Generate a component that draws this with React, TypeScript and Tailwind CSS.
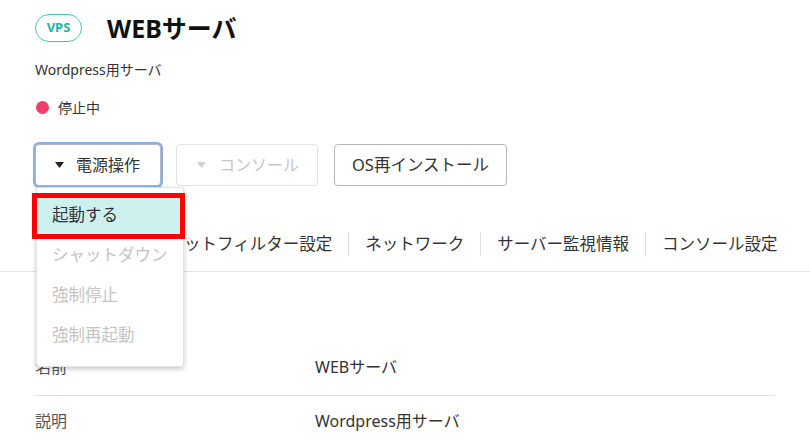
import { useState } from "react";

const font = { fontFamily: '"Noto Sans", "Noto Sans CJK JP", sans-serif' };

const tabs = ["基本情報", "パケットフィルター設定", "ネットワーク", "サーバー監視情報", "コンソール設定"];

const menuItems = [
    { label: "起動する", enabled: true },
    { label: "シャットダウン", enabled: false },
    { label: "強制停止", enabled: false },
    { label: "強制再起動", enabled: false },
];

export default function App() {
    const [open] = useState(true);

    return (
        <div className="w-[810px] h-[446px] overflow-hidden bg-white text-[#333]" style={font}>
            <div className="px-[35px] pt-[14px]">
                {/* Header */}
                <div className="flex items-center h-[28px]">
                    <span className="w-[47px] h-[28px] flex items-center justify-center rounded-full border-[1.5px] border-[#3ec8b6] text-[#1db4a3] text-[13px] font-bold">
                        VPS
                    </span>
                    <h1 className="ml-[25px] text-[25px] font-bold text-[#111] leading-none">WEBサーバ</h1>
                </div>

                <p className="mt-[18px] text-[14px] leading-[20px]">Wordpress用サーバ</p>

                <div className="mt-[17px] flex items-center h-[20px]">
                    <span className="w-[13px] h-[13px] rounded-full bg-[#f23d68] ml-[1px]" />
                    <span className="ml-[9px] text-[14px]">停止中</span>
                </div>

                {/* Action buttons */}
                <div className="mt-[27px] flex items-center gap-[15px]">
                    <div className="relative">
                        <button className="h-[42px] w-[126px] flex items-center pl-[19px] gap-[12px] rounded-[4px] border border-[#b5b5b5] ring-2 ring-[#86aef2] bg-white text-[16px]">
                            <svg width="9" height="6" viewBox="0 0 9 6"><path d="M0 0h9L4.5 6z" fill="#222" /></svg>
                            電源操作
                        </button>
                        {open && (
                            <div className="absolute left-[1px] top-[43px] z-10 w-[148px] bg-white rounded-[3px] border border-[#e2e2e2] shadow-[0_2px_5px_rgba(0,0,0,0.22)] pt-[7px] pb-[11px]">
                                {menuItems.map((item) => (
                                    <div
                                        key={item.label}
                                        className={`h-[40px] flex items-center pl-[15px] text-[16.5px] ${
                                            item.enabled ? "bg-[#cdf1ee] text-[#333]" : "text-[#c4c4c4]"
                                        }`}
                                    >
                                        {item.label}
                                    </div>
                                ))}
                                {/* highlight annotation */}
                                <div className="absolute left-[-5px] top-[5px] w-[153px] h-[46px] border-[5px] border-[#ff0000]" />
                            </div>
                        )}
                    </div>
                    <button disabled className="h-[42px] w-[142px] flex items-center pl-[20px] gap-[13px] rounded-[4px] border border-[#e3e3e3] bg-white text-[16px] text-[#c6c6c6]">
                        <svg width="9" height="6" viewBox="0 0 9 6"><path d="M0 0h9L4.5 6z" fill="#cfcfcf" /></svg>
                        コンソール
                    </button>
                    <button className="ml-[1px] h-[42px] w-[173px] flex items-center justify-center rounded-[4px] border border-[#b5b5b5] bg-white text-[16.5px]">
                        OS再インストール
                    </button>
                </div>
            </div>

            {/* Tabs */}
            <div className="mt-[46px] border-b border-[#e3e3e3] pb-[15px] pl-[36px]">
                <div className="flex items-center h-[24px] text-[16.5px]">
                    {tabs.map((t, i) => (
                        <div
                            key={t}
                            className={`px-[16px] leading-[24px] whitespace-nowrap ${i > 0 ? "border-l border-[#dcdcdc]" : ""}`}
                        >
                            {t}
                        </div>
                    ))}
                </div>
            </div>

            {/* Detail table */}
            <div className="px-[35px] pt-[66px]">
                <div className="flex items-center h-[58px] border-b border-[#e3e3e3] text-[16px]">
                    <div className="w-[280px] text-[#555]">名前</div>
                    <div>WEBサーバ</div>
                </div>
                <div className="flex items-center h-[50px] text-[16px]">
                    <div className="w-[280px] text-[#555]">説明</div>
                    <div>Wordpress用サーバ</div>
                </div>
            </div>
        </div>
    );
}
